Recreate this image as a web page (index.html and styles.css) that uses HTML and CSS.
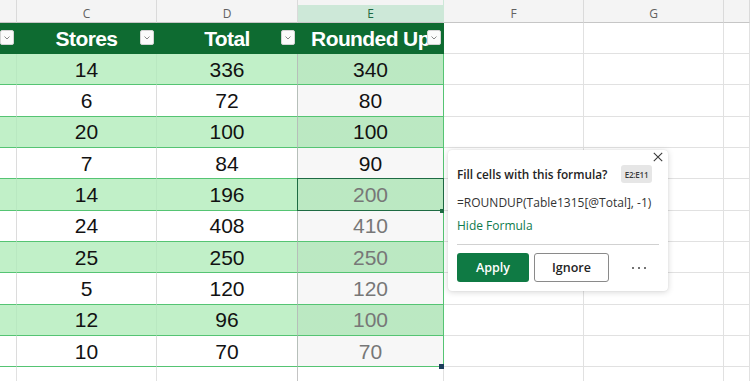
FILE: index.html
```html
<!DOCTYPE html>
<html lang="en">
<head>
<meta charset="utf-8">
<title>Fill cells with this formula</title>
<link rel="stylesheet" href="styles.css">
</head>
<body>
<div class="sheet">
  <div class="row colhead">
    <div class="c cB"></div>
    <div class="c cC">C</div>
    <div class="c cD">D</div>
    <div class="c cE">E</div>
    <div class="c cF">F</div>
    <div class="c cG">G</div>
    <div class="c cH"></div>
  </div>
  <div class="row thead">
    <div class="c cB t"><span class="dd"><svg width="6" height="4" viewBox="0 0 6 4"><path d="M0.5 0.5L3 3L5.5 0.5" fill="none" stroke="#7a7a7a" stroke-width="0.9"/></svg></span></div>
    <div class="c cC t"><span class="hd">Stores</span><span class="dd"><svg width="6" height="4" viewBox="0 0 6 4"><path d="M0.5 0.5L3 3L5.5 0.5" fill="none" stroke="#7a7a7a" stroke-width="0.9"/></svg></span></div>
    <div class="c cD t"><span class="hd">Total</span><span class="dd"><svg width="6" height="4" viewBox="0 0 6 4"><path d="M0.5 0.5L3 3L5.5 0.5" fill="none" stroke="#7a7a7a" stroke-width="0.9"/></svg></span></div>
    <div class="c cE t"><span class="hd">Rounded Up</span><span class="dd"><svg width="6" height="4" viewBox="0 0 6 4"><path d="M0.5 0.5L3 3L5.5 0.5" fill="none" stroke="#7a7a7a" stroke-width="0.9"/></svg></span></div>
    <div class="c cF"></div>
    <div class="c cG"></div>
    <div class="c cH"></div>
  </div>

  <div class="row data band">
    <div class="c cB t"></div><div class="c cC t">14</div><div class="c cD t">336</div><div class="c cE t">340</div>
    <div class="c cF"></div><div class="c cG"></div><div class="c cH"></div>
  </div>
  <div class="row data">
    <div class="c cB t"></div><div class="c cC t">6</div><div class="c cD t">72</div><div class="c cE t">80</div>
    <div class="c cF"></div><div class="c cG"></div><div class="c cH"></div>
  </div>
  <div class="row data band">
    <div class="c cB t"></div><div class="c cC t">20</div><div class="c cD t">100</div><div class="c cE t">100</div>
    <div class="c cF"></div><div class="c cG"></div><div class="c cH"></div>
  </div>
  <div class="row data">
    <div class="c cB t"></div><div class="c cC t">7</div><div class="c cD t">84</div><div class="c cE t">90</div>
    <div class="c cF"></div><div class="c cG"></div><div class="c cH"></div>
  </div>
  <div class="row data band">
    <div class="c cB t"></div><div class="c cC t">14</div><div class="c cD t">196</div><div class="c cE t prev active">200</div>
    <div class="c cF"></div><div class="c cG"></div><div class="c cH"></div>
  </div>
  <div class="row data">
    <div class="c cB t"></div><div class="c cC t">24</div><div class="c cD t">408</div><div class="c cE t prev">410</div>
    <div class="c cF"></div><div class="c cG"></div><div class="c cH"></div>
  </div>
  <div class="row data band">
    <div class="c cB t"></div><div class="c cC t">25</div><div class="c cD t">250</div><div class="c cE t prev">250</div>
    <div class="c cF"></div><div class="c cG"></div><div class="c cH"></div>
  </div>
  <div class="row data">
    <div class="c cB t"></div><div class="c cC t">5</div><div class="c cD t">120</div><div class="c cE t prev">120</div>
    <div class="c cF"></div><div class="c cG"></div><div class="c cH"></div>
  </div>
  <div class="row data band">
    <div class="c cB t"></div><div class="c cC t">12</div><div class="c cD t">96</div><div class="c cE t prev">100</div>
    <div class="c cF"></div><div class="c cG"></div><div class="c cH"></div>
  </div>
  <div class="row data">
    <div class="c cB t"></div><div class="c cC t">10</div><div class="c cD t">70</div><div class="c cE t prev">70</div>
    <div class="c cF"></div><div class="c cG"></div><div class="c cH"></div>
  </div>
  <div class="row empty">
    <div class="c cB"></div><div class="c cC"></div><div class="c cD"></div><div class="c cE"></div>
    <div class="c cF"></div><div class="c cG"></div><div class="c cH"></div>
  </div>

  <span class="handle h-active"></span>
  <span class="handle h-range"></span>

  <div class="popup">
    <button class="close" aria-label="Close"><svg width="10" height="10" viewBox="0 0 10 10"><path d="M0.8 0.8L9.2 9.2M9.2 0.8L0.8 9.2" stroke="#3b3b3b" stroke-width="1.1" fill="none"/></svg></button>
    <div class="p-head">
      <span class="p-title">Fill cells with this formula?</span>
      <span class="badge">E2:E11</span>
    </div>
    <div class="formula">=ROUNDUP(Table1315[@Total], -1)</div>
    <div class="link">Hide Formula</div>
    <div class="divider"></div>
    <div class="actions">
      <button class="btn apply">Apply</button>
      <button class="btn ignore">Ignore</button>
      <span class="more"><i></i><i></i><i></i></span>
    </div>
  </div>
</div>
</body>
</html>
```
FILE: styles.css
```css
html, body {
  margin: 0;
  padding: 0;
  background: #ffffff;
}

.sheet {
  position: relative;
  width: 750px;
  height: 381px;
  overflow: hidden;
  font-family: "Liberation Sans", Arial, sans-serif;
}

.row {
  display: flex;
}

.c {
  box-sizing: border-box;
  flex: none;
  position: relative;
  display: flex;
  align-items: center;
  justify-content: center;
  border-right: 1px solid #e1e1e1;
  border-bottom: 1px solid #e1e1e1;
  white-space: nowrap;
}

.cB { width: 17px; }
.cC { width: 140px; }
.cD { width: 141px; }
.cE { width: 146px; }
.cF { width: 140px; }
.cG { width: 140px; }
.cH { flex: 1; }

/* column letters */
.colhead .c {
  height: 23px;
  padding-top: 5px;
  background: #f4f4f4;
  border-right-color: #dadada;
  border-bottom-color: #c6c6c6;
  font-family: "Open Sans", sans-serif;
  font-size: 12px;
  color: #616161;
}

.colhead .cE {
  background: linear-gradient(#f4f4f4 5px, #cde8d8 5px);
  color: #1f6a42;
  border-right-color: #cde8d8;
}

/* table header */
.thead .c {
  height: 31px;
}

.thead .t {
  background: #0e6b31;
  border-right-color: #0e6b31;
  border-bottom: 0;
  color: #ffffff;
  font-weight: 700;
  font-size: 21px;
  letter-spacing: -0.6px;
  overflow: hidden;
}

.hd {
  display: block;
  padding-top: 1px;
}

.dd {
  position: absolute;
  right: 2px;
  top: 7px;
  width: 14px;
  height: 15px;
  box-sizing: border-box;
  background: #fbfbfb;
  border: 1px solid #d4d4d4;
  border-radius: 2px;
  display: flex;
  align-items: center;
  justify-content: center;
}

/* data rows */
.data .c {
  height: 31.33px;
  padding-top: 1px;
  font-size: 21px;
  color: #121212;
}

.data .t {
  border-bottom-color: #55c473;
  border-right-color: #dcdcdc;
}

.band .t {
  background: #c1f0c8;
  border-right-color: #b9e8c1;
}

.data .cD {
  border-right-color: #b6bfb9;
}

.data .cE {
  border-right-color: #55c473;
  background-image: linear-gradient(rgba(0, 0, 0, 0.03), rgba(0, 0, 0, 0.03));
}

.data .prev {
  color: #777777;
}

.active::after {
  content: "";
  position: absolute;
  left: -1px;
  top: -1px;
  right: -1px;
  bottom: -1px;
  border: 1px solid #1e6b43;
}

.empty .c {
  height: 20px;
}

.empty .cD {
  border-right-color: #c4c4c4;
}

/* selection handles */
.handle {
  position: absolute;
  width: 4px;
  height: 4px;
}

.h-active {
  left: 440px;
  top: 209px;
  background: #1e6b43;
}

.h-range {
  left: 439px;
  top: 364px;
  width: 5px;
  height: 5px;
  background: #1b3d5a;
}

/* popup */
.popup {
  position: absolute;
  left: 448px;
  top: 150px;
  width: 220px;
  height: 141px;
  box-sizing: border-box;
  padding: 15px 9px 9px 9px;
  background: #ffffff;
  border-radius: 4px;
  box-shadow: 0 1px 6px rgba(0, 0, 0, 0.17), 0 0 1px rgba(0, 0, 0, 0.12);
  font-family: "Open Sans", sans-serif;
  color: #242424;
  display: flex;
  flex-direction: column;
}

.close {
  position: absolute;
  right: 5px;
  top: 2px;
  width: 10px;
  height: 10px;
  padding: 0;
  border: 0;
  background: none;
  display: flex;
}

.p-head {
  height: 18px;
  display: flex;
  align-items: center;
  justify-content: space-between;
  padding-right: 7px;
}

.p-title {
  font-size: 11.8px;
  font-weight: 600;
  color: #242424;
}

.badge {
  width: 31px;
  height: 18px;
  box-sizing: border-box;
  background: #e6e6e6;
  border-radius: 3px;
  font-size: 8px;
  font-weight: 600;
  color: #3a3a3a;
  display: flex;
  align-items: center;
  justify-content: center;
  letter-spacing: -0.2px;
}

.formula {
  margin-top: 11px;
  height: 18px;
  line-height: 18px;
  font-size: 12px;
  color: #333333;
}

.link {
  margin-top: 5px;
  height: 18px;
  line-height: 18px;
  font-size: 12px;
  color: #0f7a4d;
}

.divider {
  margin-top: 9px;
  height: 1px;
  background: #d1d1d1;
}

.actions {
  margin-top: 8px;
  display: flex;
  align-items: center;
  gap: 5px;
}

.btn {
  box-sizing: border-box;
  height: 29px;
  border-radius: 3px;
  font-family: "Open Sans", sans-serif;
  font-size: 12.5px;
  font-weight: 600;
  padding: 0;
}

.apply {
  width: 72px;
  background: #0f7a44;
  border: 0;
  color: #ffffff;
}

.ignore {
  width: 75px;
  background: #ffffff;
  border: 1px solid #8a8a8a;
  color: #242424;
}

.more {
  margin-left: auto;
  width: 40px;
  display: flex;
  justify-content: center;
  gap: 4px;
}

.more i {
  width: 2px;
  height: 2px;
  border-radius: 50%;
  background: #444444;
}
```
